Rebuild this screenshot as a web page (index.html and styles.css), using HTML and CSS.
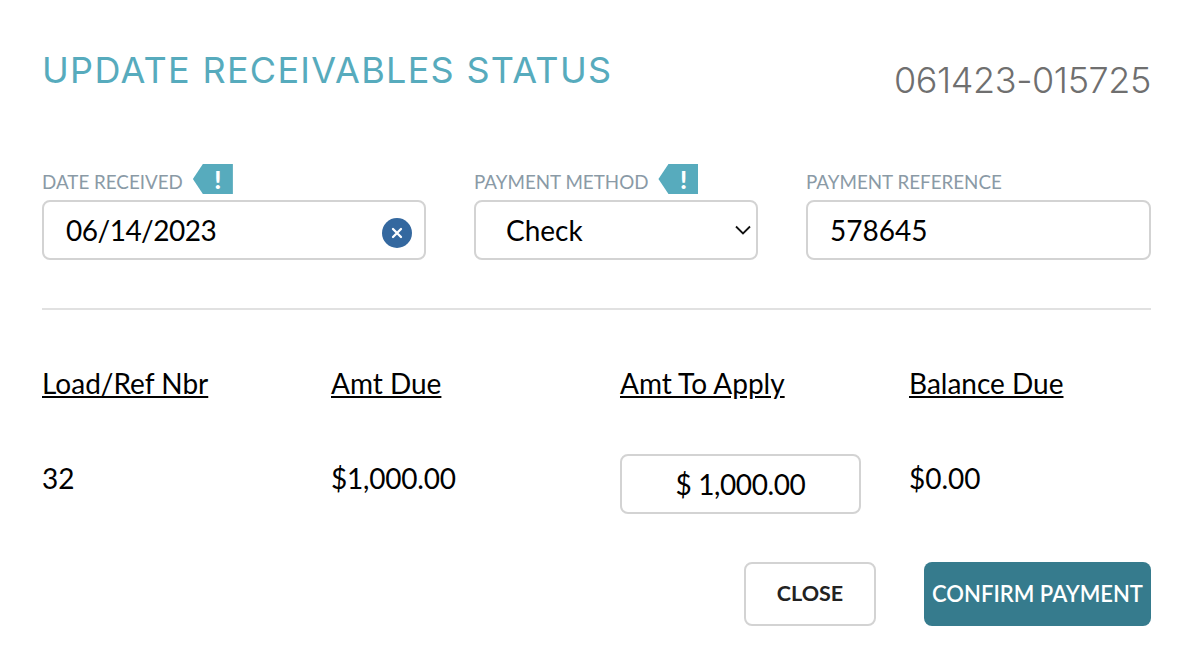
FILE: index.html
```html
<!DOCTYPE html>
<html lang="en">
<head>
    <meta charset="UTF-8">
    <meta name="viewport" content="width=device-width, initial-scale=1.0">
    <title>Update Receivables Status</title>
    <link rel="stylesheet" href="styles.css">
</head>
<body>
    <div class="modal">
        <div class="modal-header">
            <h1>UPDATE RECEIVABLES STATUS</h1>
            <div class="invoice-nbr">061423-015725</div>
        </div>

        <div class="fields">
            <div class="field">
                <div class="field-label">
                    <label for="dateReceived">DATE RECEIVED</label>
                    <span class="flag">!</span>
                </div>
                <div class="control">
                    <input type="text" id="dateReceived" class="date-input" value="06/14/2023">
                    <span class="clear-btn">
                        <svg width="12" height="12" viewBox="0 0 12 12"><path d="M2 2l8 8M10 2l-8 8" stroke="#fff" stroke-width="2.3" stroke-linecap="round"/></svg>
                    </span>
                </div>
            </div>
            <div class="field">
                <div class="field-label">
                    <label for="paymentMethod">PAYMENT METHOD</label>
                    <span class="flag">!</span>
                </div>
                <div class="control">
                    <select id="paymentMethod">
                        <option>Check</option>
                    </select>
                    <svg class="chevron" width="16" height="10" viewBox="0 0 16 10"><path d="M1 1.5l7 7 7-7" fill="none" stroke="#111" stroke-width="1.8"/></svg>
                </div>
            </div>
            <div class="field">
                <div class="field-label">
                    <label for="paymentRef">PAYMENT REFERENCE</label>
                </div>
                <div class="control">
                    <input type="text" id="paymentRef" value="578645">
                </div>
            </div>
        </div>

        <hr class="divider">

        <div class="loads">
            <div class="loads-head">Load/Ref Nbr</div>
            <div class="loads-head">Amt Due</div>
            <div class="loads-head">Amt To Apply</div>
            <div class="loads-head">Balance Due</div>

            <div class="loads-cell">32</div>
            <div class="loads-cell amt-due">$1,000.00</div>
            <div><input type="text" class="amt-input" value="$ 1,000.00"></div>
            <div class="loads-cell">$0.00</div>
        </div>

        <div class="actions">
            <button class="btn btn-close">CLOSE</button>
            <button class="btn btn-confirm">CONFIRM PAYMENT</button>
        </div>
    </div>
</body>
</html>
```

FILE: styles.css
```css
body {
    margin: 0;
    background-color: #fff;
    font-family: Lato, "Liberation Sans", sans-serif;
    color: #000;
}
.modal {
    padding: 47px 39px 0 42px;
}
.modal-header {
    display: flex;
    justify-content: space-between;
    align-items: flex-start;
    height: 117px;
}
h1 {
    margin: 0;
    font-family: Inter, sans-serif;
    font-size: 36px;
    font-weight: 400;
    letter-spacing: 1.3px;
    line-height: 46px;
    color: #57abbd;
    white-space: nowrap;
}
.invoice-nbr {
    margin-top: 10px;
    font-family: Inter, sans-serif;
    font-size: 36px;
    font-weight: 300;
    letter-spacing: -0.4px;
    line-height: 46px;
    color: #6f6f6f;
}
.fields {
    display: grid;
    grid-template-columns: 384px 284px 345px;
    column-gap: 48px;
}
.field-label {
    display: flex;
    align-items: flex-start;
    height: 36px;
}
.field-label label {
    margin-top: 7px;
    font-size: 18.8px;
    line-height: 22px;
    color: #8a9aa6;
    white-space: nowrap;
}
.flag {
    width: 40px;
    height: 30px;
    margin-left: 10px;
    padding-left: 10px;
    box-sizing: border-box;
    background-color: #57abbd;
    clip-path: polygon(0 50%, 10px 0, 100% 0, 100% 100%, 10px 100%);
    color: #fff;
    font-size: 25px;
    font-weight: 900;
    line-height: 30px;
    text-align: center;
}
.control {
    position: relative;
}
input, select {
    display: block;
    width: 100%;
    height: 60px;
    box-sizing: border-box;
    padding: 0 22px;
    border: 2px solid #d3d3d3;
    border-radius: 8px;
    background-color: #fff;
    font-family: inherit;
    font-size: 28px;
    color: #000;
    appearance: none;
    outline: none;
}
select {
    padding-left: 30px;
}
.date-input {
    letter-spacing: -0.5px;
}
.clear-btn {
    position: absolute;
    top: 18px;
    right: 14px;
    display: flex;
    align-items: center;
    justify-content: center;
    width: 30px;
    height: 30px;
    border-radius: 50%;
    background-color: #34689f;
}
.chevron {
    position: absolute;
    top: 25px;
    right: 7px;
}
.divider {
    height: 2px;
    margin: 48px 0 0;
    border: none;
    background-color: #e1e1e1;
}
.loads {
    display: grid;
    grid-template-columns: repeat(4, 289px);
    grid-template-rows: 144px 108px;
    font-size: 28px;
}
.loads-head {
    padding-top: 56px;
    line-height: 34px;
    text-decoration: underline;
}
.loads-cell {
    padding-top: 7px;
    line-height: 34px;
}
.amt-due {
    letter-spacing: -0.2px;
}
.amt-input {
    width: 241px;
    text-align: center;
    letter-spacing: -0.4px;
}
.actions {
    display: flex;
    justify-content: flex-end;
    gap: 48px;
}
.btn {
    height: 64px;
    padding: 0 0 2px;
    border-radius: 8px;
    font-family: inherit;
    font-weight: 700;
    cursor: pointer;
    white-space: nowrap;
}
.btn-close {
    width: 132px;
    border: 2px solid #d3d3d3;
    background-color: #fff;
    color: #222;
    font-size: 21.5px;
}
.btn-confirm {
    width: 227px;
    border: none;
    background-color: #367b8d;
    color: #fff;
    font-size: 22px;
    font-weight: 600;
}
```
